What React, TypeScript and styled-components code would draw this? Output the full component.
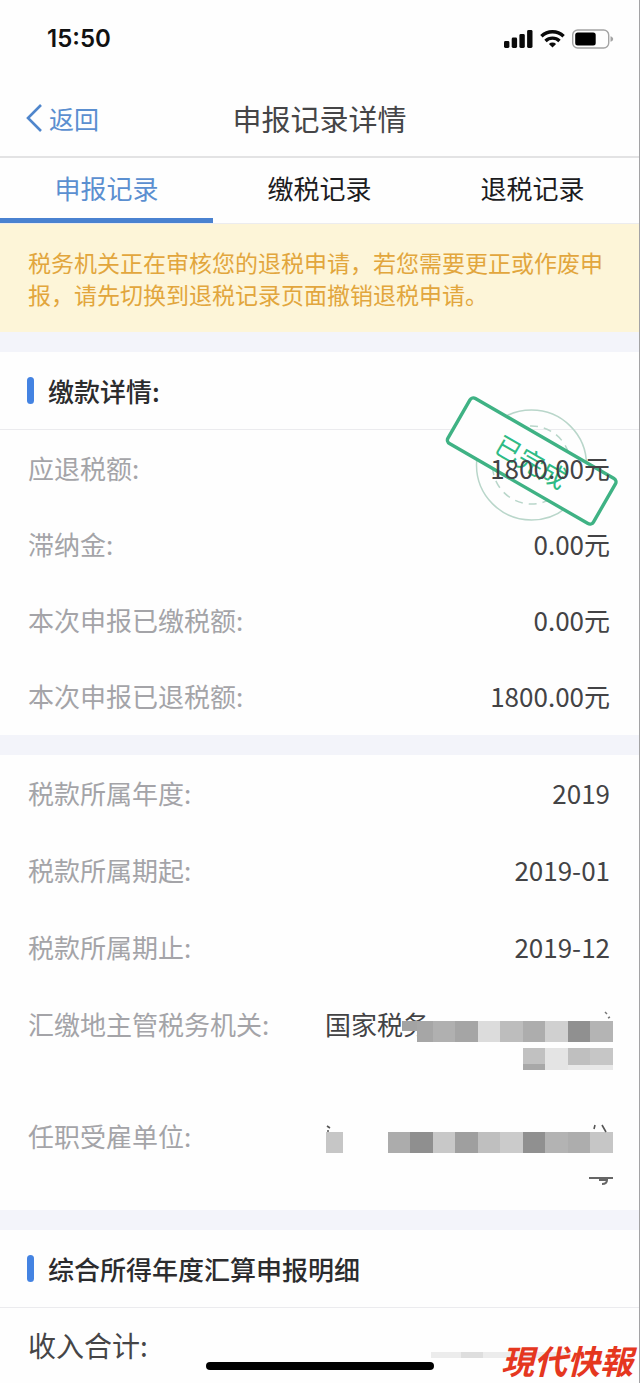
import React from "react";
import styled, { createGlobalStyle } from "styled-components";

const GlobalStyle = createGlobalStyle`
  * { box-sizing: border-box; }
  body {
    margin: 0;
    background: #fefefe;
    font-family: "Noto Sans CJK SC", "Noto Sans", sans-serif;
    color: #3c3c3e;
  }
`;

const Page = styled.div`
  position: relative;
  min-height: 100vh;
  background: #fefefe;
  border-right: 1px solid #a3a3a5;
`;

const StatusBar = styled.div`
  display: flex;
  align-items: center;
  justify-content: space-between;
  height: 78px;
  padding: 0 25px 0 47px;
`;

const Clock = styled.time`
  font: 600 24px/28px Inter, sans-serif;
  color: #111;
`;

const StatusIcons = styled.svg`
  display: block;
  width: 110px;
  height: 20px;
`;

const NavBar = styled.header`
  display: grid;
  grid-template-columns: 1fr auto 1fr;
  align-items: center;
  height: 80px;
  padding: 2px 25px 0;
  border-bottom: 2px solid #e3e3e4;
`;

const BackButton = styled.button`
  display: flex;
  align-items: center;
  gap: 6px;
  justify-self: start;
  padding: 0;
  border: 0;
  background: none;
  font: inherit;
  font-size: 25px;
  line-height: 36px;
  color: #5b8fd0;
  cursor: pointer;
`;

const NavTitle = styled.h1`
  margin: 0;
  font-size: 29px;
  font-weight: 400;
  line-height: 40px;
  color: #454547;
`;

const Tabs = styled.nav`
  display: grid;
  grid-template-columns: repeat(3, 1fr);
  height: 66px;
  border-bottom: 1px solid #ececee;
`;

const Tab = styled.button<{ $active?: boolean }>`
  padding: 0;
  border: 0;
  border-bottom: 5px solid ${(p) => (p.$active ? "#4a82d0" : "transparent")};
  background: none;
  font: inherit;
  font-size: 26px;
  line-height: 36px;
  color: ${(p) => (p.$active ? "#5b8fd0" : "#1c1c1e")};
  cursor: pointer;
`;

const Notice = styled.p`
  margin: 0;
  padding: 22px 28px;
  background: #fdf5d8;
  font-size: 23px;
  line-height: 32px;
  color: #e2a63d;
`;

const Card = styled.section`
  position: relative;
  & + & {
    border-top: 20px solid #f3f4fa;
  }
`;

const Gap = styled.div`
  height: 20px;
  background: #f3f4fa;
`;

const CardHead = styled.h2`
  display: flex;
  align-items: center;
  gap: 14px;
  height: 78px;
  margin: 0;
  padding: 0 27px;
  border-bottom: 1px solid #ebebee;
  font-size: 26px;
  font-weight: 500;
  line-height: 36px;
  color: #2c2c2e;

  &::before {
    content: "";
    width: 7px;
    height: 27px;
    border-radius: 4px;
    background: #4483e2;
  }
`;

const List = styled.dl`
  margin: 0;
`;

const Row = styled.div`
  display: flex;
  justify-content: space-between;
  padding: 19px 29px 22px 28px;
  font-size: 26px;
  line-height: 35px;

  &:first-child {
    padding-top: 20px;
  }
`;

const Label = styled.dt`
  color: #a4a4a8;
`;

const Value = styled.dd`
  position: relative;
  z-index: 1;
  margin: 0;
  color: #434345;
`;

const MaskedValue = styled(Value)`
  width: 285px;
  height: 70px;
`;

const Mosaic = styled.svg`
  position: absolute;
  top: 0;
  right: -3px;
  width: 288px;
  height: 70px;
`;

const Stamp = styled.svg`
  position: absolute;
  top: 38px;
  right: 15px;
  width: 184px;
  height: 140px;
`;

const TotalRow = styled.div`
  display: flex;
  justify-content: space-between;
  padding: 20px 29px 19px 28px;
  font-size: 28px;
  line-height: 35px;
  color: #454547;
`;

const FaintMask = styled.svg`
  width: 210px;
  height: 35px;
`;

const HomeIndicator = styled.div`
  position: absolute;
  left: 50%;
  bottom: 13px;
  width: 228px;
  height: 8px;
  margin-left: -114px;
  border-radius: 4px;
  background: #000;
`;

const SourceMark = styled.div`
  position: absolute;
  right: 6px;
  bottom: 4px;
  font-size: 33px;
  font-weight: 700;
  font-style: italic;
  line-height: 38px;
  color: #e5371f;
`;

type Block = [x: number, y: number, w: number, h: number, fill: string];

const authorityBlocks: Block[] = [
  [77, 15, 15, 10, "#a3a3a3"],
  [92, 15, 16, 21, "#a6a6a6"],
  [108, 15, 22, 21, "#b0b0b0"],
  [130, 15, 23, 21, "#a5a5a5"],
  [153, 15, 22, 21, "#dcdcdc"],
  [175, 15, 23, 21, "#bdbdbd"],
  [198, 15, 22, 21, "#adadad"],
  [220, 15, 23, 21, "#d0d0d0"],
  [243, 15, 22, 21, "#909090"],
  [265, 15, 23, 21, "#b4b4b4"],
  [198, 42, 22, 16, "#c1c1c1"],
  [198, 58, 22, 6, "#a8a8a8"],
  [220, 42, 23, 22, "#e4e4e4"],
  [243, 42, 22, 17, "#bfbfbf"],
  [265, 42, 23, 17, "#c6c6c6"],
  [243, 59, 45, 5, "#e8e8e8"],
];

const employerBlocks: Block[] = [
  [1, 14, 17, 21, "#c6c6c6"],
  [63, 14, 22, 21, "#acacac"],
  [85, 14, 23, 21, "#8f8f8f"],
  [108, 14, 22, 21, "#c8c8c8"],
  [130, 14, 23, 21, "#9f9f9f"],
  [153, 14, 22, 21, "#bfbfbf"],
  [175, 14, 23, 21, "#cbcbcb"],
  [198, 14, 22, 21, "#909090"],
  [220, 14, 23, 21, "#b3b3b3"],
  [243, 14, 22, 21, "#adadad"],
  [265, 14, 23, 21, "#c6c6c6"],
];

const Blocks = ({ items }: { items: Block[] }) => (
  <>
    {items.map(([x, y, w, h, fill]) => (
      <rect key={`${x}-${y}`} x={x} y={y} width={w} height={h} fill={fill} />
    ))}
  </>
);

const payment = [
  ["应退税额:", "1800.00元"],
  ["滞纳金:", "0.00元"],
  ["本次申报已缴税额:", "0.00元"],
  ["本次申报已退税额:", "1800.00元"],
];

const period = [
  ["税款所属年度:", "2019"],
  ["税款所属期起:", "2019-01"],
  ["税款所属期止:", "2019-12"],
];

const Rows = ({ items }: { items: string[][] }) => (
  <>
    {items.map(([label, value]) => (
      <Row key={label}>
        <Label>{label}</Label>
        <Value>{value}</Value>
      </Row>
    ))}
  </>
);

const PeriodList = styled(List)`
  ${Row} {
    padding-top: 20px;
  }
`;

export default function App() {
  return (
    <>
      <GlobalStyle />
      <Page>
        <StatusBar>
          <Clock>15:50</Clock>
          <StatusIcons viewBox="0 0 110 20" aria-hidden="true">
            <g fill="#0a0a0a">
              <rect x="0" y="12" width="5.4" height="7" rx="1.4" />
              <rect x="7.7" y="8.6" width="5.4" height="10.4" rx="1.4" />
              <rect x="15.4" y="5" width="5.4" height="14" rx="1.4" />
              <rect x="23.1" y="1" width="5.4" height="18" rx="1.4" />
              <path d="M48.5 18.6l-3.6-3.7a5.3 5.3 0 0 1 7.2 0z" />
            </g>
            <g fill="none" stroke="#0a0a0a" strokeWidth="3.4">
              <path d="M37.4 7.2a16 16 0 0 1 22.2 0" />
              <path d="M41.5 11.9a10.2 10.2 0 0 1 14 0" />
            </g>
            <rect x="68.7" y="1" width="36" height="18" rx="5" fill="none" stroke="#a4a4a4" strokeWidth="1.4" />
            <rect x="71.2" y="3.5" width="20.5" height="13" rx="2.5" fill="#000" />
            <path d="M106.5 7.2c3.6 1 3.6 4.6 0 5.6z" fill="#a4a4a4" />
          </StatusIcons>
        </StatusBar>

        <NavBar>
          <BackButton type="button">
            <svg width="18" height="28" viewBox="0 0 18 28" fill="none" stroke="#4f86cc" strokeWidth="2.6" aria-hidden="true">
              <path d="M16 1L3 14l13 13" />
            </svg>
            返回
          </BackButton>
          <NavTitle>申报记录详情</NavTitle>
        </NavBar>

        <Tabs>
          <Tab type="button" $active>申报记录</Tab>
          <Tab type="button">缴税记录</Tab>
          <Tab type="button">退税记录</Tab>
        </Tabs>

        <Notice>
          税务机关正在审核您的退税申请，若您需要更正或作废申报，请先切换到退税记录页面撤销退税申请。
        </Notice>
        <Gap />

        <Card>
          <CardHead>缴款详情:</CardHead>
          <Stamp viewBox="440 390 184 140" role="img" aria-label="已完成">
            <circle cx="531.5" cy="465" r="55" fill="none" stroke="#b9d6ca" strokeWidth="1.5" />
            <circle cx="531.5" cy="465" r="39" fill="none" stroke="#b9d6ca" strokeWidth="1.5" strokeDasharray="8 6" />
            <g transform="rotate(30 531.7 461)">
              <rect x="447.7" y="435" width="168" height="52" rx="4" fill="#fefefe" stroke="#3fb284" strokeWidth="3.4" />
              <text x="531.7" y="472" textAnchor="middle" fontSize="26" fill="#2fbb85">已完成</text>
            </g>
          </Stamp>
          <List>
            <Rows items={payment} />
          </List>
        </Card>

        <Card>
          <PeriodList>
            <Rows items={period} />
            <Row>
              <Label>汇缴地主管税务机关:</Label>
              <MaskedValue>
                国家税务
                <Mosaic viewBox="0 0 288 70" aria-hidden="true">
                  <Blocks items={authorityBlocks} />
                  <path d="M280 6l2 2M283 12l2-1" stroke="#777" strokeWidth="1.5" />
                </Mosaic>
              </MaskedValue>
            </Row>
            <Row>
              <Label>任职受雇单位:</Label>
              <MaskedValue>
                <Mosaic viewBox="0 0 288 70" aria-hidden="true">
                  <Blocks items={employerBlocks} />
                  <path d="M2 8l3 2M2 13h2M270 7l-1 4M277 7l4 7" stroke="#555" strokeWidth="1.6" fill="none" />
                  <path d="M264 60h24M274 62h8q0 4-5 4" stroke="#666" strokeWidth="2" fill="none" />
                </Mosaic>
              </MaskedValue>
            </Row>
          </PeriodList>
        </Card>

        <Card>
          <CardHead>综合所得年度汇算申报明细</CardHead>
          <TotalRow>
            <span>收入合计:</span>
            <FaintMask viewBox="0 0 210 35" aria-hidden="true">
              <rect x="31" y="24" width="140" height="6" fill="#ececec" />
              <rect x="61" y="24" width="22" height="6" fill="#dedede" />
            </FaintMask>
          </TotalRow>
        </Card>

        <HomeIndicator />
        <SourceMark>現代快報</SourceMark>
      </Page>
    </>
  );
}
